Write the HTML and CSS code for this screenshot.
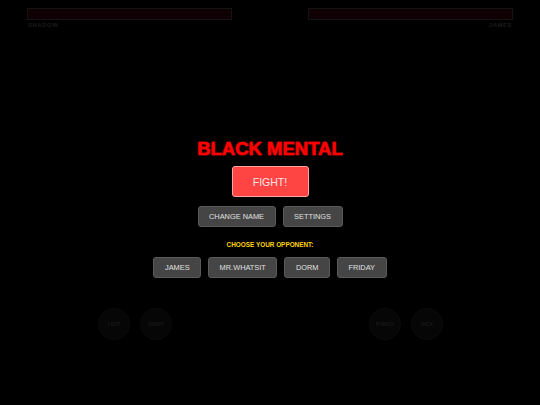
FILE: index.html
```html
<!DOCTYPE html>
<html lang="en">
<head>
<meta charset="utf-8">
<title>Black Mental</title>
<link rel="stylesheet" href="styles.css">
</head>
<body>
  <div class="game">
    <header class="hud">
      <div class="fighter">
        <div class="health"></div>
        <div class="name">SHADOW</div>
      </div>
      <div class="fighter fighter-right">
        <div class="health"></div>
        <div class="name">JAMES</div>
      </div>
    </header>

    <main class="menu">
      <h1 class="title">BLACK MENTAL</h1>
      <button class="btn btn-fight">FIGHT!</button>
      <div class="row row-options">
        <button class="btn">CHANGE NAME</button>
        <button class="btn">SETTINGS</button>
      </div>
      <p class="pick-label">CHOOSE YOUR OPPONENT:</p>
      <div class="row row-opponents">
        <button class="btn">JAMES</button>
        <button class="btn">MR.WHATSIT</button>
        <button class="btn">DORM</button>
        <button class="btn">FRIDAY</button>
      </div>
    </main>

    <footer class="controls">
      <div class="pad">
        <div class="touch">LEFT</div>
        <div class="touch">RIGHT</div>
      </div>
      <div class="pad">
        <div class="touch">PUNCH</div>
        <div class="touch">KICK</div>
      </div>
    </footer>
  </div>
</body>
</html>
```

FILE: styles.css
```css
* {
  box-sizing: border-box;
}

html,
body {
  margin: 0;
  background: #000;
}

body {
  font-family: "Liberation Sans", Arial, sans-serif;
  color: #ddd;
}

.game {
  width: 540px;
  height: 405px;
  display: flex;
  flex-direction: column;
  overflow: hidden;
}

/* Faded in-fight HUD behind the menu */
.hud {
  display: flex;
  justify-content: space-between;
  padding: 8px 27px 0 27px;
}

.fighter {
  width: 205px;
}

.health {
  height: 12px;
  background: #0e0003;
  border: 1px solid #141414;
}

.name {
  margin-top: 2px;
  font-size: 6px;
  font-weight: bold;
  letter-spacing: 0.5px;
  color: #1c1c1c;
  line-height: 7px;
  padding-left: 1px;
}

.fighter-right .name {
  text-align: right;
  padding-right: 1px;
}

/* Main menu */
.menu {
  display: flex;
  flex-direction: column;
  align-items: center;
  margin-top: 109px;
}

.title {
  margin: 0;
  font-size: 18.5px;
  line-height: 22px;
  font-weight: bold;
  color: #ff0000;
  -webkit-text-stroke: 0.6px #ff0000;
  text-shadow: 0 0 2px rgba(255, 0, 0, 0.5);
}

.btn {
  font-family: "Liberation Sans", Arial, sans-serif;
  font-size: 7.4px;
  height: 21px;
  padding: 0 10.5px;
  color: #e0e0e0;
  background: #454545;
  border: 1px solid #5a5a5a;
  border-radius: 3px;
  cursor: pointer;
}

.btn-fight {
  margin-top: 6px;
  width: 77px;
  height: 31px;
  font-size: 10.5px;
  color: #ffe6e6;
  background: #ff4444;
  border: 1px solid #ffa3a3;
}

.row {
  display: flex;
  gap: 7px;
}

.row-options {
  margin-top: 9px;
}

.pick-label {
  margin: 14px 0 0;
  font-size: 6.4px;
  line-height: 7px;
  font-weight: bold;
  color: #ffd400;
}

.row-opponents {
  margin-top: 9px;
}

/* Faded touch pads */
.controls {
  display: flex;
  justify-content: space-between;
  padding: 30px 97px 0 98px;
}

.pad {
  display: flex;
  gap: 10px;
}

.touch {
  width: 32px;
  height: 32px;
  border-radius: 50%;
  background: #060606;
  border: 1px solid #0b0b0b;
  display: flex;
  align-items: center;
  justify-content: center;
  font-size: 5px;
  font-weight: bold;
  color: #181818;
}
```
